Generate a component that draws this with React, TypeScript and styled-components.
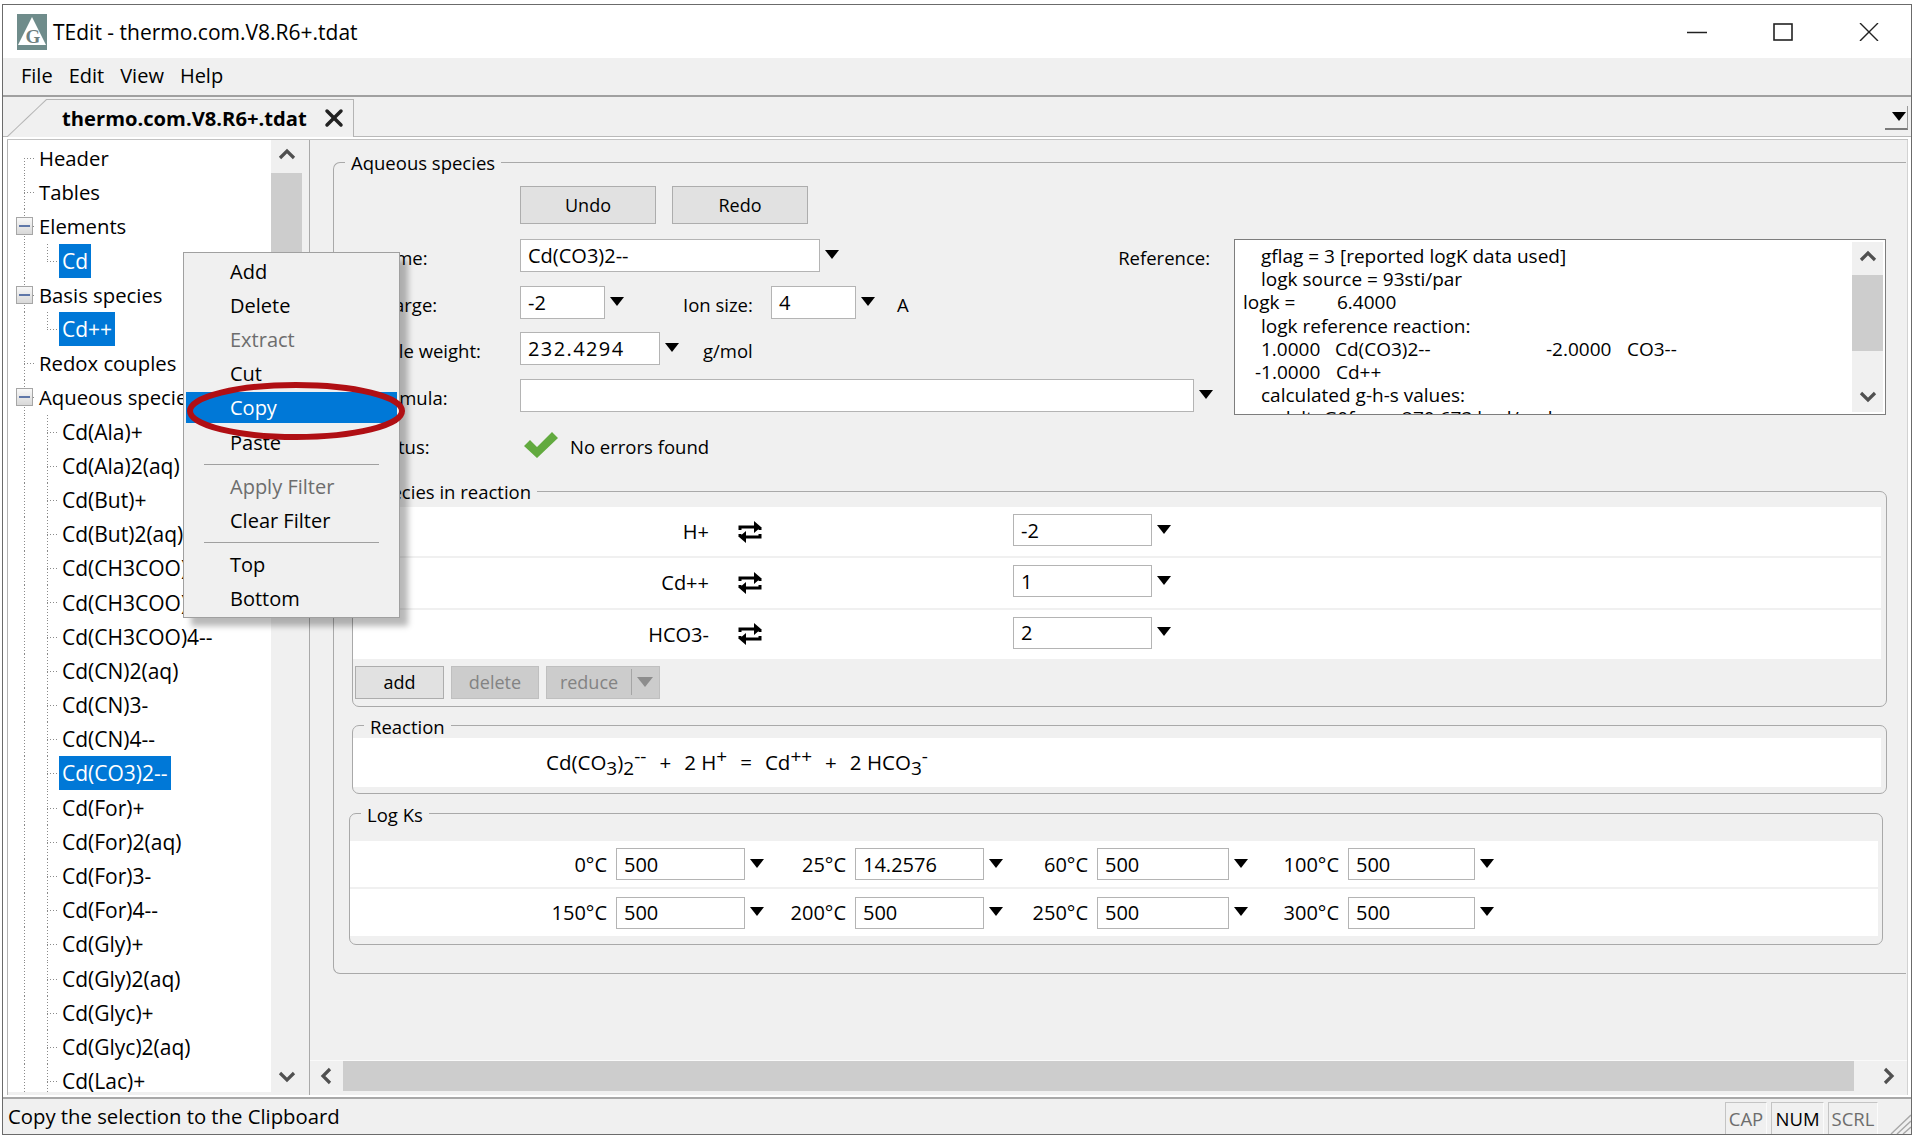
import { FC } from "react";
import styled, { createGlobalStyle, css } from "styled-components";
import { X } from "lucide-react";

const FONT = `"Open Sans", "Noto Sans", "Liberation Sans", sans-serif`;

const GlobalStyle = createGlobalStyle`
  html, body {
    margin: 0;
    background: #fff;
    overflow: hidden;
  }
  * {
    box-sizing: border-box;
  }
`;

type TreeItem = {
  label: string;
  level: 0 | 1;
  expander?: boolean;
  selected?: boolean;
  lastChild?: boolean;
  firstRow?: boolean;
};

const TREE: TreeItem[] = [
  { label: "Header", level: 0, firstRow: true },
  { label: "Tables", level: 0 },
  { label: "Elements", level: 0, expander: true },
  { label: "Cd", level: 1, selected: true, lastChild: true },
  { label: "Basis species", level: 0, expander: true },
  { label: "Cd++", level: 1, selected: true, lastChild: true },
  { label: "Redox couples", level: 0 },
  { label: "Aqueous species", level: 0, expander: true },
  ...[
    "Cd(Ala)+",
    "Cd(Ala)2(aq)",
    "Cd(But)+",
    "Cd(But)2(aq)",
    "Cd(CH3COO)+",
    "Cd(CH3COO)2(aq)",
    "Cd(CH3COO)4--",
    "Cd(CN)2(aq)",
    "Cd(CN)3-",
    "Cd(CN)4--",
  ].map((label): TreeItem => ({ label, level: 1 })),
  { label: "Cd(CO3)2--", level: 1, selected: true },
  ...[
    "Cd(For)+",
    "Cd(For)2(aq)",
    "Cd(For)3-",
    "Cd(For)4--",
    "Cd(Gly)+",
    "Cd(Gly)2(aq)",
    "Cd(Glyc)+",
    "Cd(Glyc)2(aq)",
    "Cd(Lac)+",
  ].map((label): TreeItem => ({ label, level: 1 })),
];

const LOG_KS = [
  [
    ["0°C", "500"],
    ["25°C", "14.2576"],
    ["60°C", "500"],
    ["100°C", "500"],
  ],
  [
    ["150°C", "500"],
    ["200°C", "500"],
    ["250°C", "500"],
    ["300°C", "500"],
  ],
];

const Caret: FC = () => (
  <CaretSvg viewBox="0 0 14 9">
    <path d="M0 0h14L7 9z" fill="#000" />
  </CaretSvg>
);

const Chevron: FC<{ dir: "up" | "down" | "left" | "right" }> = ({ dir }) => {
  const d = {
    up: "M2 11 9 4l7 7",
    down: "M2 5l7 7 7-7",
    left: "M12 2 5 9l7 7",
    right: "M5 2l7 7-7 7",
  }[dir];
  return (
    <ChevronSvg viewBox="0 0 18 18">
      <path d={d} fill="none" stroke="#505050" strokeWidth="3.2" />
    </ChevronSvg>
  );
};

const SwapIcon: FC = () => (
  <SwapSvg viewBox="0 0 24 22">
    <path
      d="M2 9V6h15M2 13v3h0M22 13v3H7M22 9V6"
      fill="none"
      stroke="#000"
      strokeWidth="3"
    />
    <path d="M16 0l7 6-7 6zM8 10l-7 6 7 6z" fill="#000" />
  </SwapSvg>
);

const Logo: FC = () => (
  <LogoSvg viewBox="0 0 30 36">
    <rect width="30" height="36" fill="#6f8c8b" />
    <path d="M15 3 29 31H1z" fill="#fff" />
    <text
      x="16"
      y="29"
      fontFamily="Liberation Serif, serif"
      fontWeight="700"
      fontSize="19"
      fill="#6f7f7f"
      textAnchor="middle"
    >
      G
    </text>
  </LogoSvg>
);

const App: FC = () => {
  return (
    <Window>
      <GlobalStyle />
      <TitleBar>
        <Logo />
        <TitleText>TEdit - thermo.com.V8.R6+.tdat</TitleText>
        <WindowControls>
          <WinIcon viewBox="0 0 20 18">
            <path d="M0 9.5h20" stroke="#222" strokeWidth="1.5" />
          </WinIcon>
          <WinIcon viewBox="0 0 20 18">
            <rect x="1" y="1" width="18" height="16" fill="none" stroke="#222" strokeWidth="1.6" />
          </WinIcon>
          <WinIcon viewBox="0 0 20 18">
            <path d="M1 0l18 18M19 0 1 18" stroke="#222" strokeWidth="1.4" />
          </WinIcon>
        </WindowControls>
      </TitleBar>

      <MenuBar>
        <span>File</span>
        <span>Edit</span>
        <span>View</span>
        <span>Help</span>
      </MenuBar>

      <TabBar>
        <TabSlant />
        <Tab>
          <TabName>thermo.com.V8.R6+.tdat</TabName>
          <X size={28} strokeWidth={3} color="#222" />
        </Tab>
        <TabMenuButton>
          <Caret />
        </TabMenuButton>
      </TabBar>

      <Main>
        <TreePane>
          <Tree>
            {TREE.map((item) => (
              <TreeRow
                key={item.label}
                $level={item.level}
                $first={item.firstRow}
                $last={item.lastChild}
              >
                <TreeGutter $level={item.level}>
                  {item.expander && <Expander />}
                </TreeGutter>
                <TreeLabel $selected={item.selected}>{item.label}</TreeLabel>
              </TreeRow>
            ))}
          </Tree>
          <VScroll>
            <ScrollEnd>
              <Chevron dir="up" />
            </ScrollEnd>
            <VThumb $height={327} />
            <ScrollSpacer />
            <ScrollEnd>
              <Chevron dir="down" />
            </ScrollEnd>
          </VScroll>
        </TreePane>

        <Splitter />

        <RightPane>
          <Content>
            <OuterGroup>
              <Legend>Aqueous species</Legend>
              <UndoRow>
                <PushButton $width={136} $height={38}>Undo</PushButton>
                <PushButton $width={136} $height={38}>Redo</PushButton>
              </UndoRow>

              <FormArea>
                <FormFields>
                  <FormRow>
                    <FormLabel>Name:</FormLabel>
                    <Field $width={300}>Cd(CO3)2--</Field>
                    <Caret />
                    <ReferenceLabel>Reference:</ReferenceLabel>
                  </FormRow>
                  <FormRow>
                    <FormLabel>Charge:</FormLabel>
                    <Field $width={85}>-2</Field>
                    <Caret />
                    <InlineLabel $left={59} $width={88}>Ion size:</InlineLabel>
                    <Field $width={85}>4</Field>
                    <Caret />
                    <InlineLabel $left={22}>A</InlineLabel>
                  </FormRow>
                  <FormRow>
                    <FormLabel>Mole weight:</FormLabel>
                    <Field $width={140} $tracking={1.4}>232.4294</Field>
                    <Caret />
                    <InlineLabel $left={24}>g/mol</InlineLabel>
                  </FormRow>
                  <FormRow>
                    <FormLabel>Formula:</FormLabel>
                    <Field $width={674} />
                    <Caret />
                  </FormRow>
                  <StatusRow>
                    <FormLabel>Status:</FormLabel>
                    <CheckSvg viewBox="0 0 36 26">
                      <path d="M1 14l6-6 7 7L29 0l6 6-21 20z" fill="#62aa3f" />
                    </CheckSvg>
                    <InlineLabel $left={11}>No errors found</InlineLabel>
                  </StatusRow>
                </FormFields>

                <ReferenceBox>
                  <ReferenceText>
                    <RefLine $indent={18}>gflag = 3 [reported logK data used]</RefLine>
                    <RefLine $indent={18}>logk source = 93sti/par</RefLine>
                    <RefLine>
                      <RefCol $width={94}>logk =</RefCol>
                      <span>6.4000</span>
                    </RefLine>
                    <RefLine $indent={18}>logk reference reaction:</RefLine>
                    <RefLine $indent={18}>
                      <RefCol $width={74}>1.0000</RefCol>
                      <RefCol $width={211}>Cd(CO3)2--</RefCol>
                      <RefCol $width={81}>-2.0000</RefCol>
                      <span>CO3--</span>
                    </RefLine>
                    <RefLine $indent={12}>
                      <RefCol $width={81}>-1.0000</RefCol>
                      <span>Cd++</span>
                    </RefLine>
                    <RefLine $indent={18}>calculated g-h-s values:</RefLine>
                    <RefLine $indent={36}>
                      <RefCol $width={117}>deltaG0f =</RefCol>
                      <span>-270.673 kcal/mol</span>
                    </RefLine>
                  </ReferenceText>
                  <RefScroll>
                    <ScrollEnd>
                      <Chevron dir="up" />
                    </ScrollEnd>
                    <VThumb $height={76} />
                    <ScrollSpacer />
                    <ScrollEnd>
                      <Chevron dir="down" />
                    </ScrollEnd>
                  </RefScroll>
                </ReferenceBox>
              </FormArea>

              <InnerGroup $top={18}>
                <Legend>Species in reaction</Legend>
                <SpeciesRows>
                  {[
                    ["H+", "-2"],
                    ["Cd++", "1"],
                    ["HCO3-", "2"],
                  ].map(([name, value]) => (
                    <SpeciesRow key={name}>
                      <SpeciesName>{name}</SpeciesName>
                      <SwapIcon />
                      <SpeciesValue>
                        <Field $width={139}>{value}</Field>
                        <Caret />
                      </SpeciesValue>
                    </SpeciesRow>
                  ))}
                </SpeciesRows>
                <ActionRow>
                  <PushButton $width={89} $height={33}>add</PushButton>
                  <PushButton $width={88} $height={33} $disabled>delete</PushButton>
                  <SplitButton>
                    <span>reduce</span>
                    <SplitArrow>
                      <svg viewBox="0 0 16 10" width="16" height="10">
                        <path d="M0 0h16L8 10z" fill="#8d8d8d" />
                      </svg>
                    </SplitArrow>
                  </SplitButton>
                </ActionRow>
              </InnerGroup>

              <InnerGroup $top={7}>
                <Legend>Reaction</Legend>
                <ReactionRow>
                  <span>
                    Cd(CO<sub>3</sub>)<sub>2</sub>
                    <sup>--</sup>
                  </span>
                  <span>+</span>
                  <span>
                    2 H<sup>+</sup>
                  </span>
                  <span>=</span>
                  <span>
                    Cd<sup>++</sup>
                  </span>
                  <span>+</span>
                  <span>
                    2 HCO<sub>3</sub>
                    <sup>-</sup>
                  </span>
                </ReactionRow>
              </InnerGroup>

              <LogGroup>
                <Legend>Log Ks</Legend>
                <LogRows>
                  {LOG_KS.map((row, r) => (
                    <LogRow key={r}>
                      {row.map(([temp, value]) => (
                        <LogCell key={temp}>
                          <LogLabel>{temp}</LogLabel>
                          <Field>{value}</Field>
                          <CaretSlot>
                            <Caret />
                          </CaretSlot>
                        </LogCell>
                      ))}
                    </LogRow>
                  ))}
                </LogRows>
              </LogGroup>
            </OuterGroup>
          </Content>

          <HScroll>
            <HEnd>
              <Chevron dir="left" />
            </HEnd>
            <HThumb />
            <HEndWide>
              <Chevron dir="right" />
            </HEndWide>
          </HScroll>
        </RightPane>
      </Main>

      <StatusBar>
        <StatusText>Copy the selection to the Clipboard</StatusText>
        <Indicator $width={42}>CAP</Indicator>
        <Indicator $width={53} $on>NUM</Indicator>
        <Indicator $width={50}>SCRL</Indicator>
        <Grip viewBox="0 0 22 20">
          <path d="M2 20 22 1M8 20 22 7M14 20l8-7" stroke="#a8a8a8" strokeWidth="1.4" />
        </Grip>
      </StatusBar>

      <ContextMenu>
        <MenuItem>Add</MenuItem>
        <MenuItem>Delete</MenuItem>
        <MenuItem $disabled>Extract</MenuItem>
        <MenuItem>Cut</MenuItem>
        <MenuItem $active>Copy</MenuItem>
        <MenuItem>Paste</MenuItem>
        <MenuSeparator />
        <MenuItem $disabled>Apply Filter</MenuItem>
        <MenuItem>Clear Filter</MenuItem>
        <MenuSeparator />
        <MenuItem>Top</MenuItem>
        <MenuItem>Bottom</MenuItem>
        <Highlight viewBox="0 0 220 60">
          <ellipse cx="110" cy="30" rx="106" ry="26" fill="none" stroke="#b00f14" strokeWidth="6" />
        </Highlight>
      </ContextMenu>
    </Window>
  );
};

const Window = styled.div`
  position: relative;
  display: flex;
  flex-direction: column;
  width: 1910px;
  height: 1131px;
  margin: 4px 0 0 2px;
  border: 1px solid #6b6b6b;
  background: #fff;
  color: #000;
  font-family: ${FONT};
  font-size: 20px;
  overflow: hidden;
`;

const TitleBar = styled.div`
  flex: none;
  display: flex;
  align-items: center;
  height: 53px;
  padding: 0 32px 0 14px;
  background: #fff;
`;

const LogoSvg = styled.svg`
  width: 30px;
  height: 36px;
`;

const TitleText = styled.div`
  margin-left: 6px;
  font-size: 21px;
`;

const WindowControls = styled.div`
  display: flex;
  align-items: center;
  gap: 66px;
  margin-left: auto;
`;

const WinIcon = styled.svg`
  width: 20px;
  height: 18px;
`;

const MenuBar = styled.div`
  flex: none;
  display: flex;
  align-items: center;
  gap: 16px;
  height: 39px;
  padding: 0 0 2px 18px;
  background: #f0f0f0;
  border-bottom: 2px solid #a0a0a0;
`;

const TabBar = styled.div`
  flex: none;
  display: flex;
  align-items: flex-end;
  height: 40px;
  padding-left: 4px;
  background: #f0f0f0;
  border-bottom: 1px solid #b9b9b9;
`;

const TabSlant = styled.div`
  width: 40px;
  height: 38px;
  margin-bottom: -1px;
  background: linear-gradient(
    to bottom right,
    #f0f0f0 calc(50% - 1px),
    #b4b4b4 50%,
    #f0f0f0 calc(50% + 1px)
  );
`;

const Tab = styled.div`
  display: flex;
  align-items: center;
  width: 307px;
  height: 38px;
  margin-bottom: -1px;
  padding: 0 0 2px 15px;
  background: #f0f0f0;
  border-top: 1px solid #b4b4b4;
  border-right: 1px solid #b4b4b4;
`;

const TabName = styled.span`
  margin-right: 13px;
  font-weight: 700;
  font-size: 20.2px;
`;

const TabMenuButton = styled.div`
  display: flex;
  align-items: center;
  justify-content: center;
  width: 23px;
  height: 24px;
  margin: 0 3px 6px auto;
  border-right: 1px solid #9a9a9a;
  border-bottom: 2px solid #7a7a7a;
`;

const CaretSvg = styled.svg`
  flex: none;
  width: 14px;
  height: 9px;
  margin-left: 5px;
  margin-top: -2px;
`;

const ChevronSvg = styled.svg`
  width: 18px;
  height: 18px;
`;

const SwapSvg = styled.svg`
  flex: none;
  width: 24px;
  height: 22px;
`;

const CheckSvg = styled.svg`
  flex: none;
  width: 36px;
  height: 26px;
  margin-left: 3px;
`;

const Main = styled.div`
  flex: 1;
  display: flex;
  min-height: 0;
  margin: 2px 3px 2px 4px;
  border-top: 1px solid #c2c2c2;
  background: #f0f0f0;
`;

const TreePane = styled.div`
  flex: none;
  display: flex;
  width: 295px;
  padding-bottom: 3px;
  border-left: 1px solid #b4b4b4;
`;

const Tree = styled.div`
  flex: 1;
  padding-top: 1px;
  background: #fff;
  overflow: hidden;
`;

const DOT_V = "repeating-linear-gradient(to bottom, #8a8a8a 0 1px, transparent 1px 3px)";
const DOT_H = "repeating-linear-gradient(to right, #8a8a8a 0 1px, transparent 1px 3px)";

const treeLines = ($level: 0 | 1, $first?: boolean, $last?: boolean) => {
  const layers = [
    `${DOT_V} 16px ${$first ? "17px" : "0"} / 1px ${$first ? "50%" : "100%"} no-repeat`,
    `${DOT_H} ${$level ? "39px" : "16px"} 17px / 12px 1px no-repeat`,
  ];
  if ($level === 1) {
    layers.push(`${DOT_V} 39px 0 / 1px ${$last ? "50%" : "100%"} no-repeat`);
  }
  return layers.join(", ");
};

const TreeRow = styled.div<{ $level: 0 | 1; $first?: boolean; $last?: boolean }>`
  display: flex;
  align-items: center;
  height: 34.2px;
  font-size: ${(p) => (p.$level ? 21 : 20.3)}px;
  white-space: nowrap;
  background: ${(p) => treeLines(p.$level, p.$first, p.$last)};
`;

const TreeGutter = styled.div<{ $level: 0 | 1 }>`
  flex: none;
  display: flex;
  align-items: center;
  width: ${(p) => (p.$level ? 51 : 28)}px;
  padding-left: 8px;
`;

const Expander = styled.div`
  position: relative;
  width: 17px;
  height: 18px;
  border: 1px solid #a6a6a6;
  background: linear-gradient(#f8f8f8, #d8d8d8);

  &::after {
    content: "";
    position: absolute;
    left: 2px;
    right: 2px;
    top: 7px;
    height: 2px;
    background: #5f77a8;
  }
`;

const TreeLabel = styled.span<{ $selected?: boolean }>`
  display: block;
  padding: 0 3px;
  line-height: 34px;
  ${(p) =>
    p.$selected &&
    css`
      background: #0078d7;
      color: #fff;
    `}
`;

const VScroll = styled.div`
  flex: none;
  display: flex;
  flex-direction: column;
  width: 31px;
  background: #f0f0f0;
`;

const ScrollEnd = styled.div`
  flex: none;
  display: flex;
  align-items: center;
  justify-content: center;
  height: 31px;
`;

const VThumb = styled.div<{ $height: number }>`
  flex: none;
  height: ${(p) => p.$height}px;
  margin-top: 2px;
  background: #cdcdcd;
`;

const ScrollSpacer = styled.div`
  flex: 1;
`;

const Splitter = styled.div`
  flex: none;
  width: 7px;
`;

const RightPane = styled.div`
  flex: 1;
  display: flex;
  flex-direction: column;
  min-width: 0;
  border-left: 1px solid #a9a9a9;
  border-right: 1px solid #d2d2d2;
`;

const Content = styled.div`
  flex: 1;
  min-height: 0;
  padding: 10px 1px 0 23px;
  overflow: hidden;
`;

const Legend = styled.legend`
  margin-left: 11px;
  padding: 0 6px;
  font-size: 18.5px;
  line-height: 24px;
  transform: translateY(1px);
`;

const OuterGroup = styled.fieldset`
  margin: 0;
  padding: 0 19px 28px 0;
  min-width: 0;
  border: 1px solid #a9a9a9;
  border-right: none;
  border-radius: 7px 0 0 7px;
`;

const UndoRow = styled.div`
  display: flex;
  gap: 16px;
  padding: 12px 0 15px 186px;
`;

const PushButton = styled.div<{ $width: number; $height: number; $disabled?: boolean }>`
  display: flex;
  align-items: center;
  justify-content: center;
  width: ${(p) => p.$width}px;
  height: ${(p) => p.$height}px;
  border: 1px solid ${(p) => (p.$disabled ? "#bfbfbf" : "#adadad")};
  background: ${(p) => (p.$disabled ? "#cccccc" : "#e1e1e1")};
  color: ${(p) => (p.$disabled ? "#838383" : "#000")};
  font-size: 18px;
`;

const FormArea = styled.div`
  display: flex;
  align-items: flex-start;
`;

const FormFields = styled.div`
  flex: none;
  display: flex;
  flex-direction: column;
  gap: 13.5px;
  width: 900px;
`;

const FormRow = styled.div`
  display: flex;
  align-items: center;
  height: 33px;
`;

const StatusRow = styled(FormRow)`
  margin-top: 3px;
`;

const FormLabel = styled.div`
  flex: none;
  width: 186px;
  padding: 4px 0 0 37px;
  font-size: 18.5px;
  white-space: nowrap;
`;

const InlineLabel = styled.div<{ $left: number; $width?: number }>`
  flex: none;
  width: ${(p) => (p.$width ? `${p.$width}px` : "auto")};
  margin-left: ${(p) => p.$left}px;
  padding-top: 4px;
  font-size: 18.5px;
  white-space: nowrap;
`;

const ReferenceLabel = styled.div`
  margin-left: auto;
  padding: 4px 24px 0 0;
  font-size: 18.5px;
  white-space: nowrap;
`;

const Field = styled.div<{ $width?: number; $tracking?: number }>`
  flex: none;
  display: flex;
  align-items: center;
  width: ${(p) => (p.$width ? `${p.$width}px` : "auto")};
  height: 33px;
  padding-left: 7px;
  border: 1px solid #b4b4b4;
  background: #fff;
  letter-spacing: ${(p) => p.$tracking ?? 0}px;
  white-space: nowrap;
`;

const ReferenceBox = styled.div`
  flex: none;
  display: flex;
  width: 652px;
  height: 176px;
  border: 1px solid #7d7d7d;
  background: #fff;
`;

const ReferenceText = styled.div`
  flex: 1;
  padding: 5px 0 0 8px;
  font-size: 19px;
  line-height: 23.2px;
  overflow: hidden;
  white-space: nowrap;
`;

const RefLine = styled.div<{ $indent?: number }>`
  display: flex;
  padding-left: ${(p) => p.$indent ?? 0}px;
`;

const RefCol = styled.span<{ $width: number }>`
  flex: none;
  width: ${(p) => p.$width}px;
`;

const RefScroll = styled(VScroll)`
  margin: 2px;
  background: #f0f0f0;
`;

const InnerGroup = styled.fieldset<{ $top: number }>`
  margin: ${(p) => p.$top}px 0 0 18px;
  padding: 0;
  min-width: 0;
  border: 1px solid #a9a9a9;
  border-radius: 7px;
`;

const SpeciesRows = styled.div`
  display: flex;
  flex-direction: column;
  gap: 2px;
  margin: 4px 5px 0 0;
`;

const SpeciesRow = styled.div`
  display: flex;
  align-items: center;
  height: 49.3px;
  background: #fff;
`;

const SpeciesName = styled.div`
  flex: none;
  width: 356px;
  margin-right: 29px;
  text-align: right;
`;

const SpeciesValue = styled.div`
  display: flex;
  align-items: center;
  margin: 0 0 3px 251px;

  ${Field} {
    height: 32px;
  }
`;

const ActionRow = styled.div`
  display: flex;
  gap: 7px;
  padding: 7px 0 7px 2px;
`;

const SplitButton = styled.div`
  display: flex;
  align-items: center;
  width: 114px;
  height: 33px;
  border: 1px solid #bfbfbf;
  background: #cccccc;
  color: #838383;
  font-size: 18px;

  span {
    flex: 1;
    text-align: center;
  }
`;

const SplitArrow = styled.div`
  display: flex;
  align-items: center;
  justify-content: center;
  width: 28px;
  height: 100%;
  background: linear-gradient(#a5a5a5, #a5a5a5) left center / 1px 26px no-repeat;
`;

const ReactionRow = styled.div`
  display: flex;
  align-items: center;
  gap: 13px;
  height: 49px;
  margin: 0 5px 6px 0;
  padding-left: 193px;
  background: #fff;
  font-size: 20.5px;
  white-space: pre;

  sub,
  sup {
    font-size: 19px;
    line-height: 0;
    position: relative;
    vertical-align: baseline;
  }
  sub {
    top: 5px;
  }
  sup {
    top: -7px;
  }
`;

const LogGroup = styled.fieldset`
  margin: 8px 4px 0 15px;
  padding: 0;
  min-width: 0;
  border: 1px solid #a9a9a9;
  border-radius: 7px;
`;

const LogRows = styled.div`
  display: flex;
  flex-direction: column;
  gap: 2px;
  margin: 15px 4px 8px 0;
`;

const LogRow = styled.div`
  display: grid;
  grid-template-columns:
    266px 129px 24px
    86px 129px 24px
    89px 132px 24px
    95px 127px 24px;
  align-items: center;
  height: 46.5px;
  background: #fff;
`;

const LogCell = styled.div`
  display: contents;

  ${Field} {
    height: 32px;
    width: 100%;
  }
`;

const LogLabel = styled.div`
  padding-right: 9px;
  text-align: right;
  white-space: nowrap;
`;

const CaretSlot = styled.div`
  display: flex;
  justify-content: center;

  svg {
    margin-left: 0;
  }
`;

const HScroll = styled.div`
  flex: none;
  display: flex;
  align-items: stretch;
  height: 32px;
  margin-bottom: 3px;
  padding-bottom: 1px;
  border-top: 1px solid #fafafa;
`;

const HEnd = styled.div`
  flex: none;
  display: flex;
  align-items: center;
  justify-content: center;
  width: 33px;
`;

const HEndWide = styled(HEnd)`
  justify-content: flex-end;
  width: 53px;
  padding-right: 9px;
`;

const HThumb = styled.div`
  flex: 1;
  background: #cdcdcd;
`;

const StatusBar = styled.div`
  flex: none;
  display: flex;
  align-items: flex-end;
  height: 37px;
  padding-left: 5px;
  background: #f0f0f0;
  border-top: 2px solid #a8a8a8;
`;

const StatusText = styled.div`
  align-self: center;
  margin: 0 auto 2px 0;
  font-size: 20.3px;
`;

const Indicator = styled.div<{ $width: number; $on?: boolean }>`
  display: flex;
  align-items: center;
  justify-content: center;
  width: ${(p) => p.$width}px;
  height: 32px;
  margin-left: 4px;
  border-top: 1px solid #c4c4c4;
  border-left: 1px solid #c4c4c4;
  border-right: 1px solid #fbfbfb;
  font-size: 18.5px;
  color: ${(p) => (p.$on ? "#000" : "#6d6d6d")};
`;

const Grip = styled.svg`
  flex: none;
  width: 22px;
  height: 20px;
  margin-left: 11px;
`;

const ContextMenu = styled.div`
  position: absolute;
  left: 180px;
  top: 247px;
  width: 217px;
  height: 366px;
  padding: 1px 2px 0;
  background: #f0f0f0;
  border: 1px solid #a0a0a0;
  box-shadow: 8px 8px 6px rgba(0, 0, 0, 0.28);
`;

const MenuItem = styled.div<{ $disabled?: boolean; $active?: boolean }>`
  display: flex;
  align-items: center;
  height: 34.2px;
  padding-left: 44px;
  color: ${(p) => (p.$disabled ? "#6d6d6d" : "#000")};
  ${(p) =>
    p.$active &&
    css`
      color: #fff;
      background: linear-gradient(#0078d7, #0078d7) center / 100% 31px no-repeat;
    `}
`;

const MenuSeparator = styled.div`
  height: 10px;
  margin: 0 18px;
  background: linear-gradient(#a0a0a0, #a0a0a0) center / 100% 1px no-repeat;
`;

const Highlight = styled.svg`
  position: absolute;
  left: 2px;
  top: 128px;
  width: 220px;
  height: 60px;
  overflow: visible;
`;

export default App;
